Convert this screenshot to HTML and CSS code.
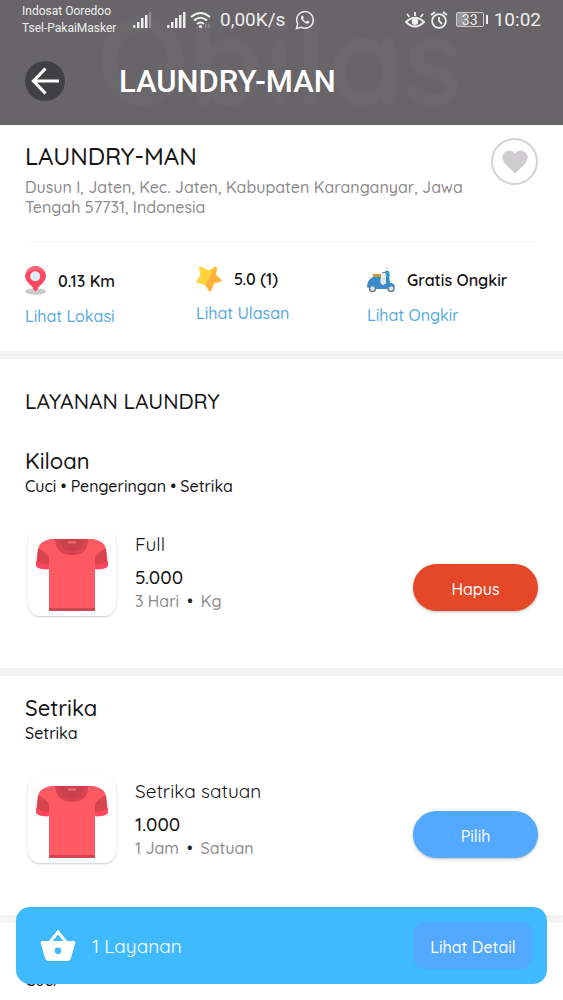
FILE: index.html
```html
<!DOCTYPE html>
<html lang="id">
<head>
<meta charset="utf-8">
<meta name="viewport" content="width=device-width, initial-scale=1">
<title>LAUNDRY-MAN</title>
<link rel="stylesheet" href="styles.css">
</head>
<body>
<svg class="defs" width="0" height="0" aria-hidden="true">
  <symbol id="shirt" viewBox="0 0 72 72">
    <path d="M15 0H57Q67 2 69 7Q71 14 72 27Q67 31 59 30V72H13V30Q5 31 0 27Q1 14 3 7Q5 2 15 0Z" fill="#ff5964"/>
    <path d="M2 9Q9 12 13 18V28Q6 27 1 23Z M70 9Q63 12 59 18V28Q66 27 71 23Z" fill="#d9454f"/>
    <path d="M0 22Q6 26 13 26V30Q4 31 0 27Z M72 22Q66 26 59 26V30Q68 31 72 27Z" fill="#ff4560"/>
    <path d="M19 0H52Q52 16 36 16Q20 16 19 0Z" fill="#d9454f"/>
    <path d="M23 0H48Q47 12 36 12Q25 12 23 0Z" fill="#cb414b"/>
    <rect x="32" y="2" width="8" height="3" rx="1" fill="#e8606a"/>
    <rect x="13" y="69" width="46" height="3" fill="#cf4650"/>
  </symbol>
</svg>
<div class="screen">
  <header class="header">
    <span class="watermark" aria-hidden="true">Obilas</span>
    <div class="status">
      <div class="carriers"><span>Indosat Ooredoo</span><span>Tsel-PakaiMasker</span></div>
      <svg class="signal" width="19" height="18" viewBox="0 0 19 18" fill="#eee"><rect y="14" width="2.5" height="3" rx="1"/><rect x="4" y="11" width="2.5" height="6"/><rect x="8" y="7" width="2.5" height="10"/><rect x="12" y="4" width="2.5" height="13"/><rect x="16" y="1" width="2" height="16" opacity=".3"/></svg>
      <svg class="signal-two" width="19" height="18" viewBox="0 0 19 18" fill="#eee"><rect y="14" width="2.5" height="3" rx="1"/><rect x="4" y="11" width="2.5" height="6"/><rect x="8" y="7" width="2.5" height="10"/><rect x="12" y="4" width="2.5" height="13"/><rect x="16" y="1" width="2.5" height="16"/></svg>
      <svg class="wifi" width="21" height="18" viewBox="0 0 21 18" fill="none" stroke="#eee" stroke-width="2"><path d="M1 6Q10.500-2 20 6M4 9.500Q10.500 4 17 9.500M7 13Q10.500 10 14 13"/><circle cx="10.500" cy="15.500" r="1.600" fill="#eee" stroke="none"/><path d="M16 13v4M19 13v4" stroke-width="1" opacity=".4"/></svg>
      <span class="speed">0,00K/s</span>
      <svg class="chat" width="20" height="20" viewBox="0 0 20 20" fill="none" stroke="#eee" stroke-width="1.500"><path d="M1.500 18.500l1.200-4.600A8.300 8.300 0 1 1 6 17.200Z"/><path d="M6.200 6.500q1-1.700 1.700-.8l1 2-.9 1.300q1.100 2 3 2.800l1.200-1.300 2.200 1.200q.3 1.700-1.900 2-2.300 0-4.800-2.600Q5.300 8.300 6.200 6.500Z" fill="#eee" stroke="none"/></svg>
      <svg class="eye" width="20" height="18" viewBox="0 0 20 18" fill="none" stroke="#eee" stroke-width="1.800"><path d="M1 11Q10 2.500 19 11Q10 20 1 11Z"/><circle cx="10" cy="10.800" r="3.200" fill="#eee" stroke="none"/><path d="M10 1v4M2 3l2.500 3M18 3l-2.500 3"/></svg>
      <svg class="alarm" width="18" height="18" viewBox="0 0 18 18" fill="none" stroke="#eee" stroke-width="1.800"><circle cx="9" cy="10" r="6.900"/><path d="M9 6v4l3 3M1 4l4-3M17 4l-4-3"/></svg>
      <span class="battery"><span class="cell">33</span><span class="nub"></span></span>
      <time class="clock">10:02</time>
    </div>
    <div class="titlebar">
      <button class="back" type="button" aria-label="Kembali"><svg width="28" height="28" viewBox="0 0 28 28" fill="none" stroke="#fff" stroke-width="3.200"><path d="M28 14H3M14.500 1.500L2.500 14l12 12.500"/></svg></button>
      <h1 class="page-title">LAUNDRY-MAN</h1>
    </div>
  </header>
  <main class="content">
    <section class="shop">
      <div class="shop-head">
        <div>
          <h2 class="shop-name">LAUNDRY-MAN</h2>
          <p class="address">Dusun I, Jaten, Kec. Jaten, Kabupaten Karanganyar, Jawa Tengah 57731, Indonesia</p>
        </div>
        <button class="favorite" type="button" aria-label="Favorit"><svg width="26" height="24" viewBox="0 0 28 25"><path d="M14 25Q8 19 3 14Q-1 9 1 5Q3 0 8 0Q12 0 14 3Q16 0 20 0Q25 0 27 5Q29 9 25 14Q20 19 14 25Z" fill="#cfcdcf"/></svg></button>
      </div>
      <hr class="rule">
      <div class="stats">
        <div class="stat">
          <div class="stat-row"><svg width="21" height="29" viewBox="0 0 21 29"><ellipse cx="10.500" cy="25.500" rx="10.500" ry="3.200" fill="#c9c9cb"/><path d="M10.500 25Q8.800 25 7.500 21Q0 15 0 10A10.500 10 0 0 1 21 10Q21 15 13.500 21Q12 25 10.500 25Z" fill="#fb4a60"/><path d="M1 8Q2 1 10.500 0Q18 1 20 7Q10-1 1 8Z" fill="#ff6b7c"/><circle cx="10.200" cy="10.300" r="5" fill="#dcecf7"/></svg><span>0.13 Km</span></div>
          <a class="link" href="#lokasi">Lihat Lokasi</a>
        </div>
        <div class="stat">
          <div class="stat-row"><svg width="26" height="26" viewBox="0 0 26 26"><g stroke-width="3" stroke-linejoin="round"><path d="M4.500 2L13 6L19.500 2L18.500 9.500L24 14.500L17 16L14 24L9 17L2 15.500L6 9.500Z" fill="#ffd43b" stroke="#ffd43b"/><path d="M19.500 2L18.500 9.500L24 14.500L17 16L14 24L11 19Z" fill="#ffb13f" stroke="#ffb13f" stroke-width="2.500"/></g></svg><span>5.0 (1)</span></div>
          <a class="link" href="#ulasan">Lihat Ulasan</a>
        </div>
        <div class="stat">
          <div class="stat-row"><svg width="28" height="28" viewBox="0 0 28 28"><path d="M20 1v5" stroke="#bcc7ce" stroke-width="1"/><path d="M15 7l5-1" stroke="#536b7c" stroke-width="1"/><path d="M18 5h4l1 5-4 1Z" fill="#3aa4c0"/><circle cx="5.500" cy="22.500" r="3" fill="#e0e5e8" stroke="#6f7f8b" stroke-width="1.500"/><circle cx="24" cy="22.500" r="3" fill="#e0e5e8" stroke="#6f7f8b" stroke-width="1.500"/><path d="M0 21Q0 14 6 11H14Q12 19 17 19L20 8 22 9 23 17Q28 17 28 21Q24 18 20 23H9Q5 17 2 22Z" fill="#3a8cc8"/><path d="M14 12Q17 11 19 8L19 18H16Q13 17 14 12Z" fill="#dcebf3"/><path d="M6 8h8v3H6Z" fill="#c9974b"/></svg><span>Gratis Ongkir</span></div>
          <a class="link" href="#ongkir">Lihat Ongkir</a>
        </div>
      </div>
    </section>
    <section class="group">
      <h2 class="services-title">LAYANAN LAUNDRY</h2>
      <h3 class="group-title">Kiloan</h3>
      <p class="group-sub">Cuci • Pengeringan • Setrika</p>
      <div class="item">
        <div class="thumb"><svg width="72" height="72"><use href="#shirt"/></svg></div>
        <div class="info"><h4 class="name">Full</h4><p class="price">5.000</p><p class="meta">3 Hari<span class="dot">•</span>Kg</p></div>
        <button class="action remove" type="button">Hapus</button>
      </div>
    </section>
    <section class="group">
      <h3 class="group-title">Setrika</h3>
      <p class="group-sub">Setrika</p>
      <div class="item">
        <div class="thumb"><svg width="72" height="72"><use href="#shirt"/></svg></div>
        <div class="info"><h4 class="name">Setrika satuan</h4><p class="price">1.000</p><p class="meta">1 Jam<span class="dot">•</span>Satuan</p></div>
        <button class="action" type="button">Pilih</button>
      </div>
    </section>
    <section class="group">
      <h3 class="group-title">Cuci</h3>
      <p class="group-sub">Cuci</p>
    </section>
  </main>
  <aside class="cart">
    <svg width="36" height="31" viewBox="0 0 36 31"><path d="M10 12L18 2l8 10" fill="none" stroke="#fff" stroke-width="3"/><path fill-rule="evenodd" d="M2 11H34Q36 11 35 14L31 28Q30 31 28 31H8Q6 31 5 28L1 14Q0 11 2 11ZM18 17.500a3.300 3.300 0 1 0 0 6.600a3.300 3.300 0 1 0 0-6.600Z" fill="#fff"/></svg>
    <span class="cart-count">1 Layanan</span>
    <button class="detail" type="button">Lihat Detail</button>
  </aside>
</div>
</body>
</html>
```
FILE: styles.css
```css
* { box-sizing: border-box; }
body, h1, h2, h3, h4, p { margin: 0; font-weight: 500; }
body { font-family: Quicksand, Lato, sans-serif; color: #151515; background: #fff; }
button { border: 0; padding: 0; font: inherit; cursor: pointer; }
svg { display: block; flex: none; }
.defs { position: absolute; }
.screen { position: relative; height: 100vh; display: flex; flex-direction: column; overflow: hidden; }

.header { position: relative; flex: none; height: 125px; overflow: hidden; background: #676568; color: #fff; font-family: Roboto, sans-serif; font-weight: 400; }
.watermark { position: absolute; top: 0; left: 96px; font: 700 122px/120px Quicksand, Lato, sans-serif; color: #6a686b; }
.status { position: relative; display: flex; align-items: center; height: 39px; padding: 0 22px; color: #eee; }
.carriers { display: flex; flex-direction: column; width: 111px; font-size: 12px; line-height: 17px; white-space: nowrap; }
.signal-two { margin-left: 15px; }
.wifi { margin-left: 4px; }
.speed { margin-left: 9px; font-size: 19px; }
.chat { margin-left: 10px; }
.eye { margin-left: auto; }
.alarm { margin-left: 5px; }
.battery { display: flex; align-items: center; gap: 2px; margin: 0 6px 0 8px; }
.cell { width: 28px; height: 15px; border: 1px solid #ccc; border-radius: 2px; background: linear-gradient(90deg, #99979a 34%, transparent 34%); font-size: 14px; line-height: 14px; text-align: center; }
.nub { width: 2px; height: 9px; background: #eee; }
.clock { font-size: 19px; }
.titlebar { position: relative; display: flex; align-items: center; gap: 54px; height: 84px; padding-left: 25px; }
.back { display: grid; place-items: center; width: 40px; height: 40px; border-radius: 50%; background: #414042; }
.page-title { font-size: 31px; font-weight: 500; }

.content { flex: 1; min-height: 0; overflow-y: auto; scrollbar-width: none; }
.shop { padding: 13px 25px 25px; }
.shop-head { display: flex; justify-content: space-between; gap: 16px; }
.shop-name { margin-top: 3px; font-size: 24px; line-height: 30px; }
.address { margin-top: 6px; font-size: 16px; line-height: 20px; color: #8c8a8c; }
.favorite { display: grid; place-items: center; flex: none; width: 47px; height: 47px; border: 2px solid #d4d2d4; border-radius: 50%; background: #fff; }
.rule { height: 1px; margin: 24px 2px 24px 6px; border: 0; background: #f2f2f2; }
.stats { display: grid; grid-template-columns: repeat(3, 1fr); align-items: start; }
.stat-row { display: flex; align-items: center; gap: 12px; font-size: 16px; font-weight: 600; line-height: 20px; }
.link { display: block; margin-top: 11px; color: #55a9e0; font-size: 16px; line-height: 20px; text-decoration: none; }

.group { padding: 17px 25px 51px; border-top: 8px solid #f4f3f4; }
.services-title { margin: 10px 0 30px; font-size: 21px; line-height: 30px; }
.group-title { font-size: 22px; line-height: 30px; }
.group-sub { font-size: 16px; line-height: 20px; }
.item { display: flex; gap: 19px; margin-top: 33px; padding-left: 3px; }
.thumb { display: grid; place-items: center; flex: none; width: 88px; height: 87px; padding-top: 4px; border-radius: 12px; background: #fff; box-shadow: 0 1px 2px #ccc; }
.info { flex: 1; padding-top: 3px; }
.name { font-size: 19px; font-weight: 400; line-height: 24px; }
.price { margin-top: 9px; font-size: 19px; line-height: 24px; }
.meta { margin-top: 2px; font-size: 16px; line-height: 20px; color: #8c8a8c; }
.dot { margin: 0 8px; color: #222; }
.action { align-self: flex-end; width: 125px; height: 47px; margin-bottom: 6px; padding-top: 2px; border-radius: 24px; background: #52a9ff; box-shadow: 0 1px 3px #bbb; color: #fff; font-size: 16px; }
.item { min-height: 88px; }
.remove { background: #e54829; }

.cart { position: absolute; right: 16px; bottom: 16px; left: 16px; display: flex; align-items: center; height: 77px; padding: 0 15px 0 24px; border-radius: 14px; background: #3fbaff; color: #fff; }
.cart-count { margin-left: 16px; font-size: 19px; font-weight: 400; }
.detail { width: 118px; height: 47px; margin-left: auto; padding-top: 2px; border-radius: 10px; background: #52a9ff; color: #fff; font-size: 16px; }
```
